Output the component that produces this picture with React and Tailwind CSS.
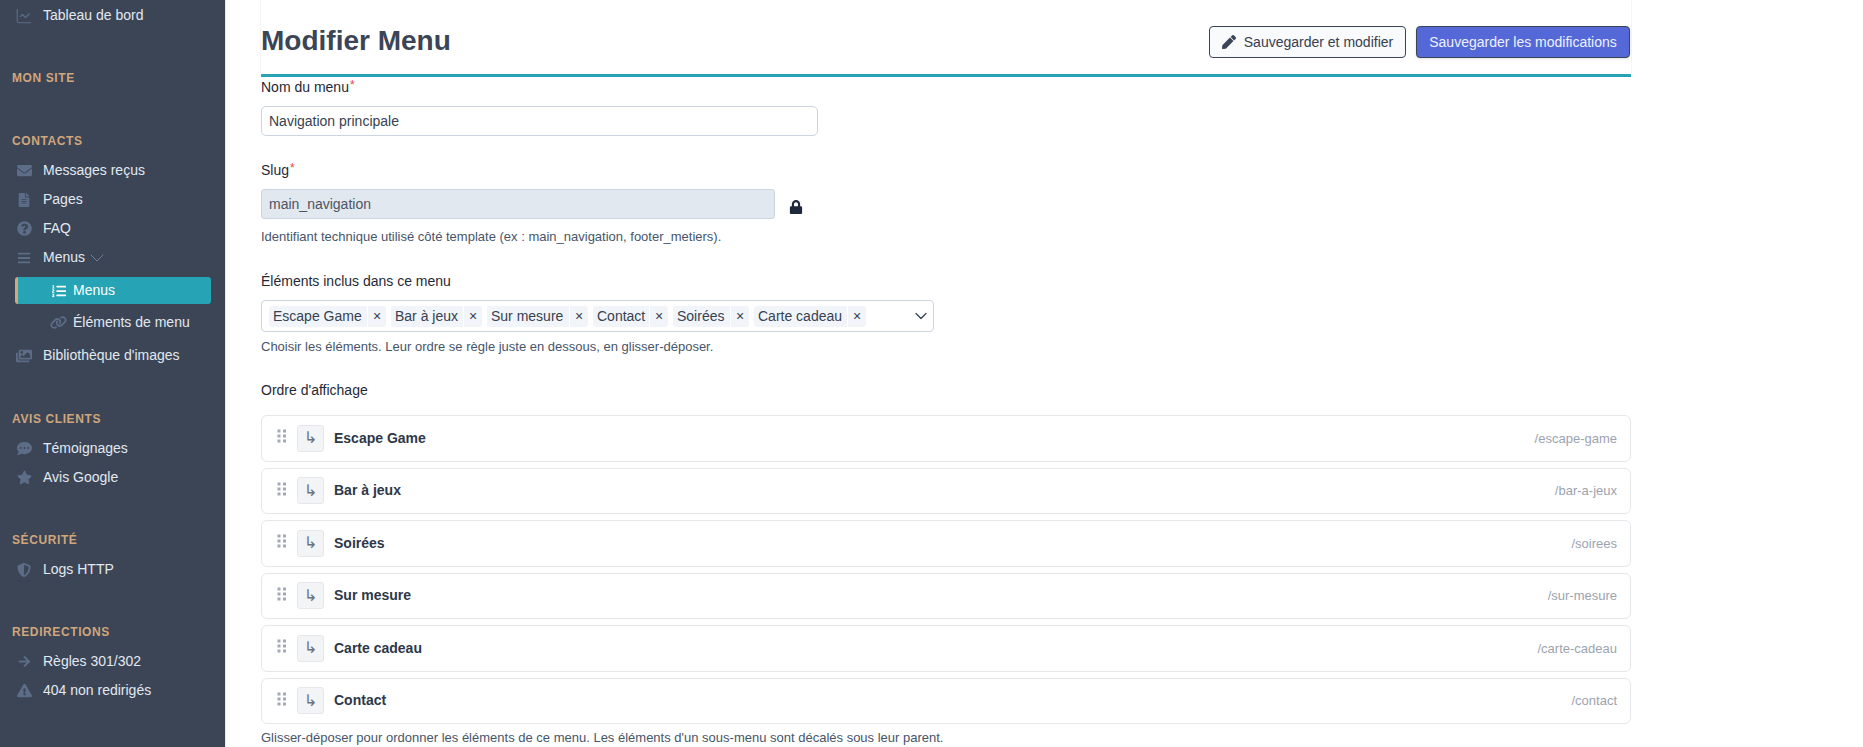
import React from 'react'
import {
  FaEnvelope, FaFileAlt, FaQuestionCircle, FaBars, FaListOl, FaImages,
  FaCommentDots, FaStar, FaShieldAlt, FaArrowRight, FaExclamationTriangle, FaPen, FaLock,
} from 'react-icons/fa'
import { FaLink } from 'react-icons/fa6'
import { ChartLine, ChevronDown } from 'lucide-react'

const CHIPS = [
  { label: 'Escape Game', w: 'w-[117px]' },
  { label: 'Bar à jeux', w: 'w-[91px]' },
  { label: 'Sur mesure', w: 'w-[101px]' },
  { label: 'Contact', w: 'w-[75px]' },
  { label: 'Soirées', w: 'w-[76px]' },
  { label: 'Carte cadeau', w: 'w-[112px]' },
]

const ROWS = [
  ['Escape Game', '/escape-game'],
  ['Bar à jeux', '/bar-a-jeux'],
  ['Soirées', '/soirees'],
  ['Sur mesure', '/sur-mesure'],
  ['Carte cadeau', '/carte-cadeau'],
  ['Contact', '/contact'],
]

function SideItem({ icon: Icon, size = 15, strokeWidth, children }) {
  return (
    <div className="flex items-center h-[29px] text-[14px] text-[#e2e8f0]">
      <span className="w-[20px] ml-[14px] mr-[9px] flex-shrink-0 flex justify-center">
        <Icon size={size} strokeWidth={strokeWidth} className="text-[#5d6d88]" />
      </span>
      {children}
    </div>
  )
}

function SideHeader({ className = 'mt-[33px]', children }) {
  return (
    <div className={`${className} h-[30px] pl-[12px] flex items-center text-[12px] font-bold tracking-[0.6px] text-[#d0a67c]`}>
      {children}
    </div>
  )
}

function Sidebar() {
  return (
    <aside className="w-[226px] flex-shrink-0 h-full bg-[#3b4556] border-r border-[#e5e7eb] pt-[1px]">
      <SideItem icon={ChartLine} size={18} strokeWidth={1.5}>Tableau de bord</SideItem>
      <SideHeader>MON SITE</SideHeader>
      <SideHeader>CONTACTS</SideHeader>
      <SideItem icon={FaEnvelope}>Messages reçus</SideItem>
      <SideItem icon={FaFileAlt} size={14}>Pages</SideItem>
      <SideItem icon={FaQuestionCircle}>FAQ</SideItem>
      <div className="flex items-center h-[29px] text-[14px] text-[#e2e8f0]">
        <span className="w-[20px] ml-[14px] mr-[9px] flex-shrink-0 flex justify-center">
          <FaBars size={14} className="text-[#5d6d88]" />
        </span>
        Menus
        <ChevronDown size={24} strokeWidth={1} className="text-[#6f7d95]" />
      </div>
      <div className="pt-[5px] pb-[4px]">
        <div className="ml-[15px] w-[196px] h-[27px] flex items-center bg-[#26a4b5] border-l-[3px] border-[#d4a77a] rounded-[3px] text-[14px] text-white">
          <FaListOl size={14} className="ml-[34px] mr-[7px] text-white" />
          Menus
        </div>
        <div className="mt-[4px] h-[29px] flex items-center text-[14px] text-[#e2e8f0]">
          <FaLink size={17} className="ml-[50px] mr-[6px] text-[#5d6d88]" />
          Éléments de menu
        </div>
      </div>
      <SideItem icon={FaImages} size={16}>Bibliothèque d'images</SideItem>
      <SideHeader className="mt-[34px]">AVIS CLIENTS</SideHeader>
      <SideItem icon={FaCommentDots}>Témoignages</SideItem>
      <SideItem icon={FaStar}>Avis Google</SideItem>
      <SideHeader>SÉCURITÉ</SideHeader>
      <SideItem icon={FaShieldAlt} size={14}>Logs HTTP</SideItem>
      <SideHeader>REDIRECTIONS</SideHeader>
      <SideItem icon={FaArrowRight} size={13}>Règles 301/302</SideItem>
      <SideItem icon={FaExclamationTriangle}>404 non redirigés</SideItem>
    </aside>
  )
}

function Label({ required, className = '', children }) {
  return (
    <div className={`h-[20px] leading-[20px] text-[14px] text-[#1f2937] ${className}`}>
      {children}
      {required && <sup className="ml-[1px] text-[#ef4444] text-[12px] top-[-3px]">*</sup>}
    </div>
  )
}

function Help({ className = '', children }) {
  return <p className={`h-[16px] leading-[16px] text-[13px] text-[#475569] ${className}`}>{children}</p>
}

function Grip() {
  return (
    <svg width="10" height="14" viewBox="0 0 10 14" className="text-[#a3a9b5] flex-shrink-0 -mt-[4px]" fill="currentColor">
      <rect x="0.5" y="0.5" width="3" height="3" />
      <rect x="6" y="0.5" width="3" height="3" />
      <rect x="0.5" y="5.5" width="3" height="3" />
      <rect x="6" y="5.5" width="3" height="3" />
      <rect x="0.5" y="10.5" width="3" height="3" />
      <rect x="6" y="10.5" width="3" height="3" />
    </svg>
  )
}

export default function App() {
  return (
    <div className="flex w-[1863px] h-[747px] overflow-hidden bg-white font-['Liberation_Sans',Arial,sans-serif]">
      <Sidebar />
      <main className="w-[1405px] pl-[35px]">
        {/* Header */}
        <div className="-ml-[1px] w-[1372px] h-[74px] flex items-center justify-between border-x border-[#f5f5f5]">
          <h1 className="text-[28px] font-bold text-[#3b4556] pt-[7px]">Modifier Menu</h1>
          <div className="flex items-center gap-[10px] pt-[10px] pr-[1px]">
            <button className="flex items-center justify-center gap-[8px] w-[197px] h-[32px] rounded-[4px] border border-[#3b4556] bg-[#f8fafc] text-[14px] text-[#374151]">
              <FaPen size={14} className="text-[#3b4556]" />
              Sauvegarder et modifier
            </button>
            <button className="w-[214px] h-[32px] rounded-[4px] border border-[#3b4556] bg-[#5468d8] text-[14px] text-[#eef2ff] shadow-sm">
              Sauvegarder les modifications
            </button>
          </div>
        </div>
        <div className="w-[1370px] h-[3px] bg-[#26a4b5]" />

        {/* Formulaire */}
        <div className="w-[1370px]">
          <Label required>Nom du menu</Label>
          <div className="mt-[9px] w-[557px] h-[30px] flex items-center px-[7px] rounded-[5px] border border-[#cbd5e1] text-[14px] text-[#374151]">
            Navigation principale
          </div>

          <Label required className="mt-[24px]">Slug</Label>
          <div className="mt-[9px] flex items-center">
            <div className="w-[514px] h-[30px] flex items-center px-[7px] rounded-[3px] border border-[#cbd5e1] bg-[#e2e8f0] text-[14px] text-[#4b5563]">
              main_navigation
            </div>
            <FaLock size={14} className="ml-[14px] mt-[5px] text-[#1e293b]" />
          </div>
          <Help className="mt-[10px]">Identifiant technique utilisé côté template (ex : main_navigation, footer_metiers).</Help>

          <Label className="mt-[26px]">Éléments inclus dans ce menu</Label>
          <div className="mt-[9px] w-[673px] h-[32px] flex items-center justify-between pl-[7px] pr-[2px] rounded-[4px] border border-[#cbd5e1]">
            <div className="flex gap-[5px]">
              {CHIPS.map(c => (
                <span key={c.label} className={`flex items-center h-[21px] ${c.w} rounded-[3px] bg-[#f1f5f9] text-[14px] text-[#374151]`}>
                  <span className="flex-1 pl-[4px] whitespace-nowrap border-r border-white leading-[21px]">{c.label}</span>
                  <span className="w-[18px] text-center text-[14px]">×</span>
                </span>
              ))}
            </div>
            <ChevronDown size={20} strokeWidth={1.5} className="text-[#374151]" />
          </div>
          <Help className="mt-[7px]">Choisir les éléments. Leur ordre se règle juste en dessous, en glisser-déposer.</Help>

          <Label className="mt-[25px]">Ordre d'affichage</Label>
          <div className="mt-[15px] flex flex-col gap-[6px]">
            {ROWS.map(([name, path]) => (
              <div key={path} className="h-[46.5px] flex items-center pl-[15px] pr-[13px] rounded-[6px] border border-[#e5e7eb]">
                <Grip />
                <span className="ml-[10px] w-[27px] h-[27px] flex items-center justify-center rounded-[3px] border border-[#e5e7eb] bg-[#f3f4f6] text-[16px] text-[#6b7280] font-['DejaVu_Sans',sans-serif]">↳</span>
                <span className="ml-[10px] text-[14px] font-bold text-[#2d3748]">{name}</span>
                <span className="ml-auto text-[13px] text-[#9ca3af]">{path}</span>
              </div>
            ))}
          </div>
          <Help className="mt-[6px]">Glisser-déposer pour ordonner les éléments de ce menu. Les éléments d'un sous-menu sont décalés sous leur parent.</Help>
        </div>
      </main>
    </div>
  )
}
